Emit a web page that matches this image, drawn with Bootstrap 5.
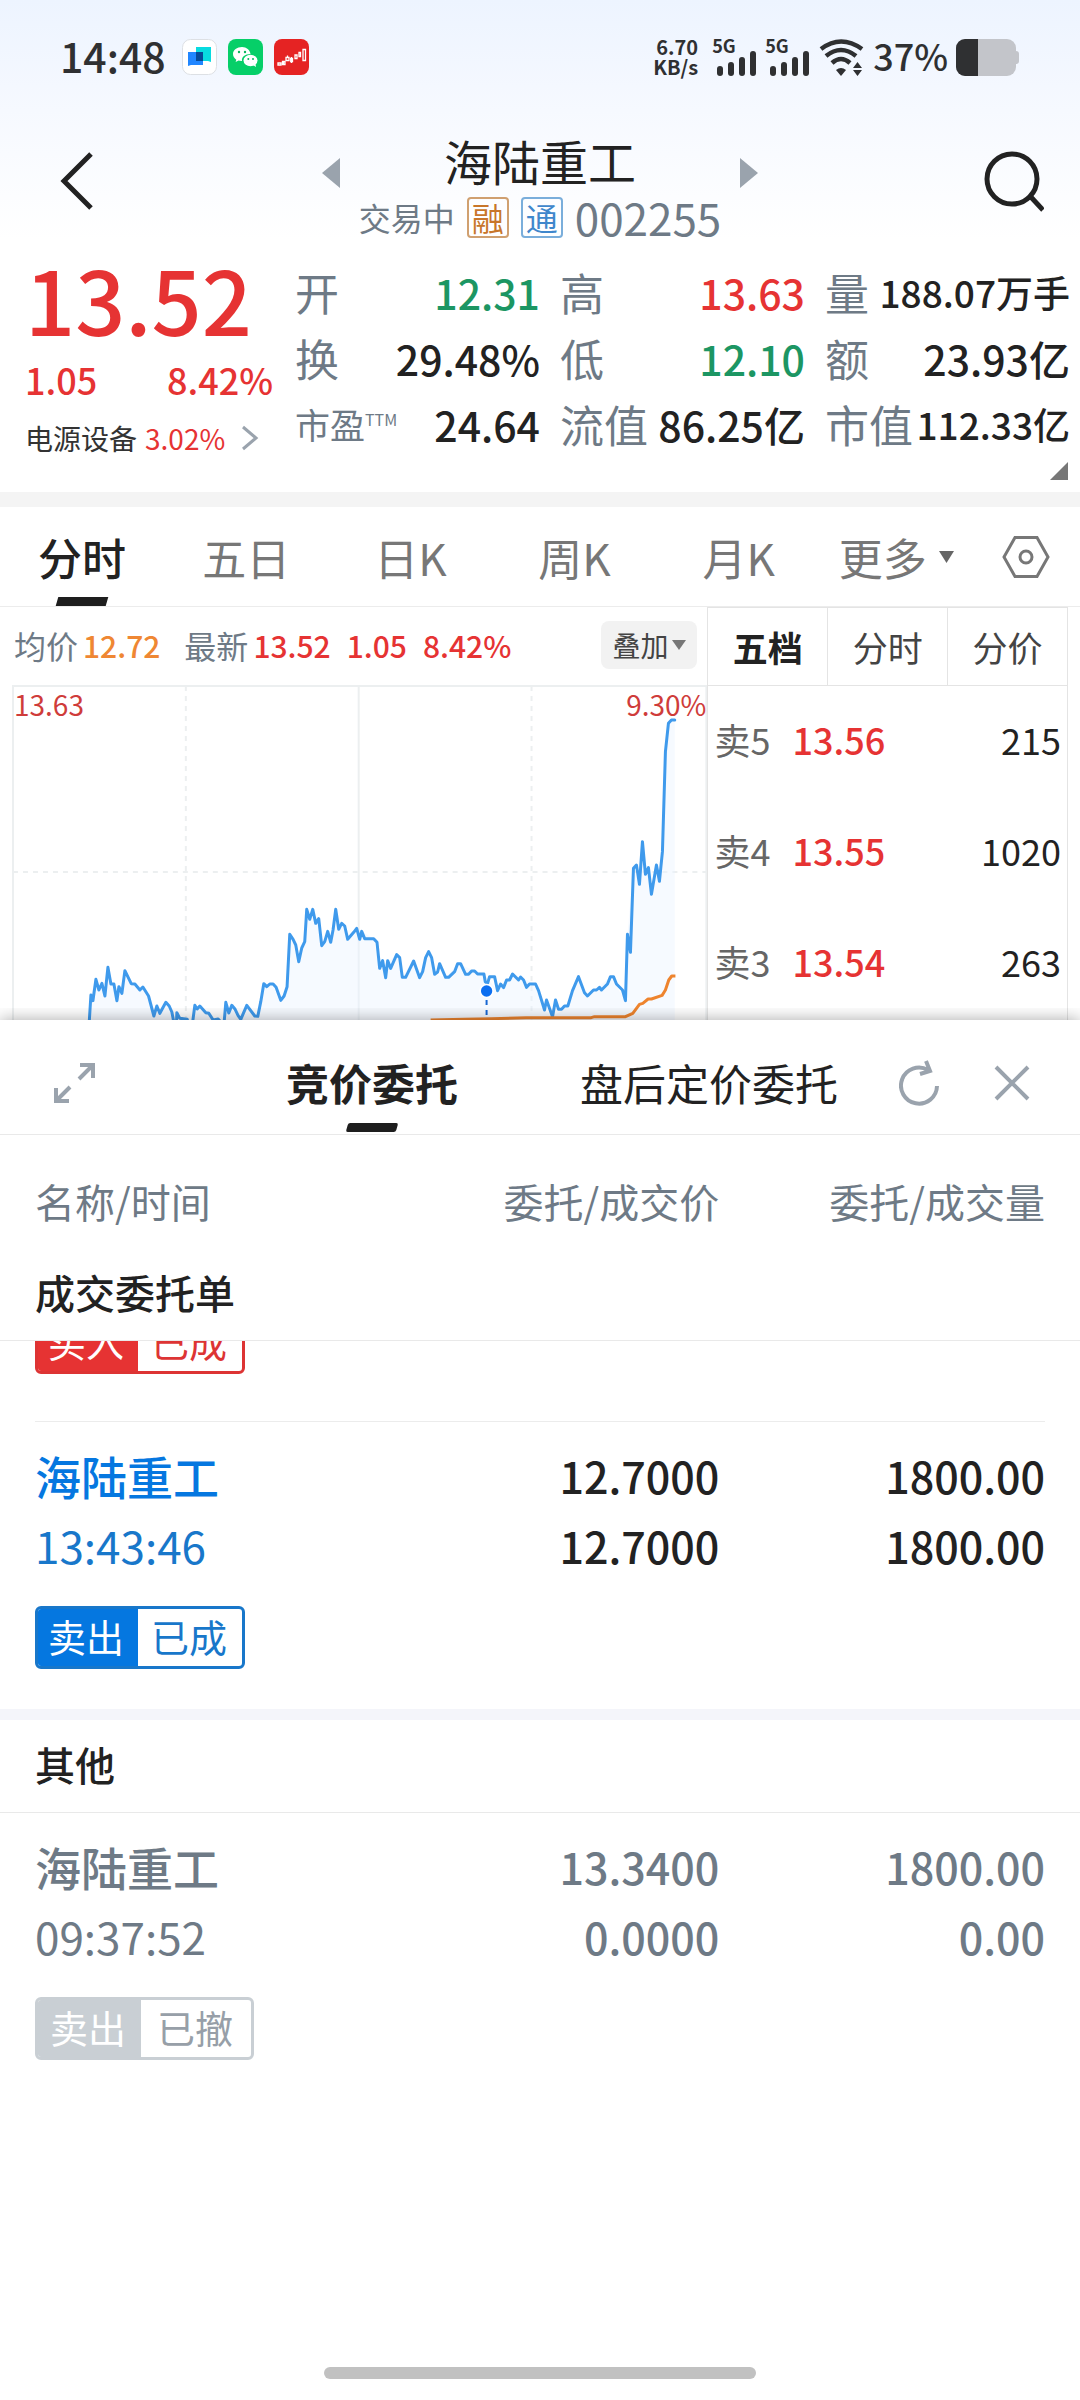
<!DOCTYPE html>
<html lang="zh-CN">
<head>
<meta charset="utf-8">
<meta name="viewport" content="width=device-width, initial-scale=1">
<title>海陆重工 002255</title>
<link href="https://cdn.jsdelivr.net/npm/bootstrap@5.3.0/dist/css/bootstrap.min.css" rel="stylesheet">
<style>
:root{--ink:#222;--slate:#6e7a86;--up:#e63333;--down:#1c9663;--sell:#0577e0;--rule:#ececec}
body{font-family:"Noto Sans CJK SC","Noto Sans",sans-serif;color:var(--ink);background:#fff;min-height:100vh;display:flex;flex-direction:column;overflow-x:hidden}
button.plain{background:none;border:0;padding:0;color:inherit;line-height:1;display:flex;align-items:center;justify-content:center}
svg{display:block;flex:none}
.fw-mid{font-weight:500}
.text-ink{color:var(--ink)}
.c-up{color:var(--up)}.c-down{color:var(--down)}.c-slate{color:var(--slate)}
.sky{background:linear-gradient(#edf4ff,#f6f9ff 110px,#fff 240px)}

.status{height:114px;padding:0 60px;color:#2f3032}
.status-time{font-size:41px;line-height:48px;font-weight:500;padding-bottom:4px}
.speed{font-size:20px;line-height:20px;font-weight:700;text-align:right}
.signal{position:relative;margin-left:16px}
.signal + .signal{margin-left:9px}
.signal span{position:absolute;left:-2px;top:-6px;font-size:18px;line-height:24px;font-weight:700}
.status-pct{font-size:36px;line-height:40px;font-weight:500;padding-bottom:4px}

.titlebar{height:137px;padding:18px 36px 0 46px}
.stock-name{font-size:48px;line-height:56px;font-weight:400;margin:0}
.stock-sub{font-size:32px;line-height:42px;gap:12px;margin-top:8px}
.stock-code{font-size:44px}
.flag{width:42px;height:41px;border:2px solid;border-radius:4px;font-size:32px;line-height:36px;text-align:center}
.flag-margin{color:#c8762a;border-color:#d0a070}
.flag-link{color:#3f87cc;border-color:#7aaedb}

.quote{height:241px;padding:8px 10px 0 25px}
.quote-left{width:270px;padding-right:22px}
.last-price{font-size:88px;line-height:94px;font-weight:500;margin-top:-8px}
.chg{font-size:36px;line-height:44px;font-weight:500;margin-top:12px}
.sector{font-size:28px;line-height:36px;margin-top:19px;color:#333}
.stats{display:grid;grid-template-columns:repeat(3,1fr);column-gap:20px;margin:0;height:198px}
.stat{height:66px;line-height:66px;white-space:nowrap}
.stat dt{font-weight:400;font-size:44px;color:var(--slate)}
.stat dt.tight{font-size:35px}
.stat sup{font-size:16px;top:-13px;line-height:1;vertical-align:baseline}
.stat dd{margin:0;font-size:41px;font-weight:500}
.stat dd.tight{font-size:37px}
.stat-corner{right:12px;bottom:12px}
.band{height:15px;background:#f4f4f4}

.ktabs{height:100px;border-bottom:1px solid var(--rule);color:#777;font-size:44px}
.ktabs .plain{height:99px}
.ktabs-main{width:76%}
.ktabs-more{width:24%;padding:0 30px 0 18px}
button.tab-on{position:relative;color:var(--ink);font-weight:500}
.tab-on::after{content:"";position:absolute;left:50%;bottom:0;width:50px;height:9px;margin-left:-25px;background:#1e1e1e;transform:skewX(-16deg)}

.market{height:413px;overflow:hidden}
.chart-col{width:65.5%}
.info{height:78px;padding:0 10px 2px 14px;font-size:30px;font-weight:500;color:var(--up)}
.info-label{font-size:32px;font-weight:400;color:var(--slate);margin-right:5px}
.overlay-btn.plain{height:48px;width:96px;background:#f2f2f2;border-radius:8px;font-size:28px;color:#444;font-weight:400;gap:4px}
.chart{height:335px}
.chart svg{width:100%;height:335px}
.axis-tag{font-size:28px;line-height:28px;top:5px;color:#cf3c3a}
.tag-price{left:14px}.tag-pct{right:1px}
.book{border:solid #e4e4e4;border-width:1px 1px 0 1px;margin-right:12px}
.book-tabs{height:78px;font-size:35px;color:#444}
.book-tabs .plain{border-bottom:1px solid #e4e4e4}
.book-tabs .plain + .plain{border-left:1px solid #e4e4e4}
.book-tabs .active{color:var(--ink);font-weight:700}
.book table{width:100%;font-size:36px}
.book td{height:111px;padding:0 6px 6px}
.book td:first-child{width:84px;color:#666}
.book td:nth-child(2){padding-left:0}

.sheet{position:relative;box-shadow:0 0 16px rgba(0,0,0,.35);background:#fff;clip-path:inset(-12px 0 0 0)}
.sheet-head{height:115px;border-bottom:1px solid #e9e9e9;padding:0 50px 0 52px;font-size:43px}
.sheet-head .plain{height:114px;padding-top:11px}
.sheet-head .tab-on{margin-left:190px}
.sheet-head .tab-on::after{bottom:2px;border-radius:2px}
.refresh{margin:0 53px 0 61px}
.orders{width:100%;table-layout:fixed;margin:0}
.orders th,.orders td{padding:0;font-weight:400}
.orders tr > :first-child{padding-left:35px}
.orders tr > :last-child{padding-right:35px}
.orders thead th{height:112px;padding-top:20px;font-size:40px;color:var(--slate)}
.orders .sect th{height:93px;padding-bottom:3px;font-size:40px;border-bottom:1px solid #e9e9e9;font-weight:500}
.line-a > *{height:88px;padding-top:18px!important;vertical-align:top;font-size:43px;line-height:70px;font-weight:500!important}
.line-a > :first-child{font-size:46px}
.line-b > *{height:72px;vertical-align:top;font-size:43px;line-height:70px;font-weight:500!important}
.line-b > :first-child{font-weight:400!important;font-size:44px}
.cut{height:33px}
.entry-rule{border-top:1px solid var(--rule);margin-top:47px}
.state{display:inline-flex;height:63px;border:3px solid;border-radius:6px;font-size:38px;line-height:54px;overflow:hidden;flex:none}
.state b{font-weight:400;color:#fff;padding:0 14px 0 10px}
.state i{font-style:normal;padding:0 15px 0 13px}
.st-buy{border-color:#dd3434;color:#dd3434}.st-buy b{background:var(--up)}
.st-sell{border-color:#1877ca;color:#1877ca}.st-sell b{background:var(--sell)}
.st-off{border-color:#c9cfd4;color:#979fa8}.st-off b{background:#c9cfd4;padding:0 15px 0 12px}
.st-off i{padding:0 18px 0 16px}
.state-cell{height:127px;padding-top:24px!important;vertical-align:top}
.band2{height:11px;background:#f4f5fa}
.home{width:432px;height:12px;border-radius:6px;background:#c1c1c1;margin:auto auto 21px}
</style>
</head>
<body>
<div class="sky">
  <div class="status d-flex align-items-center">
    <span class="status-time">14:48</span>
    <div class="d-flex ms-3" style="gap:11px">
      <svg width="35" height="36" viewBox="0 0 35 36"><rect x=".5" y=".5" width="34" height="35" rx="8" fill="#fff" stroke="#dde0e4"/><path d="M14 8h15v15l-3-1H14z" fill="#08dbe0"/><path d="M6 13h15v13H9l-3 1z" fill="#2186ff"/><path d="M14 13h7v9h-7z" fill="#064a98"/></svg>
      <svg width="35" height="36" viewBox="0 0 35 36"><rect width="35" height="36" rx="8" fill="#06cf68"/><path d="M14 8c-5 0-9 3-9 7 0 2.500 1.400 4.400 3.300 5.700L7.600 23l3-1.500c1 .3 2.300.5 3.400.4-.6-4 3-7 8.500-7C22 11 18.500 8 14 8z" fill="#fff"/><ellipse cx="22.500" cy="21.500" rx="7" ry="5.700" fill="#fff"/><path d="M25 26l3 2-.5-3z" fill="#fff"/><g fill="#06b85c"><circle cx="11" cy="13" r="1.200"/><circle cx="17" cy="13" r="1.200"/><circle cx="20.300" cy="20" r="1"/><circle cx="25" cy="20" r="1"/></g></svg>
      <svg width="35" height="36" viewBox="0 0 35 36"><rect width="35" height="36" rx="8" fill="#e52323"/><g stroke="#fff" stroke-width="1.300" fill="none"><path d="M4 24h3v2H4zM9.500 22v4M8.500 22.500h2.500v3H8.500zM12 18.500h3v3h-3zM13.500 16.500v2M17.500 18v6M16.700 19.500h1.800v3h-1.800zM21 16h2v3.500h-2zM25 13.500h1.500v4H25zM29 10.500h2.500v11H29z"/></g></svg>
    </div>
    <div class="d-flex align-items-center ms-auto">
      <div class="speed"><div>6.70</div><div>KB/s</div></div>
      <div class="signal"><span>5G</span><svg width="44" height="37" viewBox="0 0 44 37" fill="#2f3032"><rect x="3" y="27" width="6" height="10" rx="3"/><rect x="14" y="23" width="6" height="14" rx="3"/><rect x="25" y="18" width="6" height="19" rx="3"/><rect x="36" y="12" width="6" height="25" rx="3"/></svg></div>
      <div class="signal"><span>5G</span><svg width="44" height="37" viewBox="0 0 44 37" fill="#2f3032"><rect x="3" y="27" width="6" height="10" rx="3"/><rect x="14" y="23" width="6" height="14" rx="3"/><rect x="25" y="18" width="6" height="19" rx="3"/><rect x="36" y="12" width="6" height="25" rx="3"/></svg></div>
      <svg class="ms-2" width="46" height="37" viewBox="0 0 46 37" fill="none" stroke="#2f3032" stroke-width="4.500"><path d="M2 10Q22-5 43 10M7 17Q22 5 37 17M13 24Q22 16 31 24"/><path d="M17 31q5-4 10 0l-5 6z" fill="#2f3032" stroke="none"/><path d="M34 29h9l-4.500-6zM34 31h9l-4.500 6z" fill="#2f3032" stroke="none"/></svg>
      <span class="status-pct ms-2">37%</span>
      <svg class="ms-2" width="64" height="37" viewBox="0 0 64 37"><rect width="60" height="37" rx="9" fill="#c3c5ca"/><rect x="56" y="12" width="7" height="13" rx="3" fill="#c3c5ca"/><path d="M9 0h13v37H9a9 9 0 0 1-9-9V9a9 9 0 0 1 9-9z" fill="#2f3032"/></svg>
    </div>
  </div>
  <div class="titlebar d-flex justify-content-between">
    <button class="plain align-self-start pt-3" aria-label="返回"><svg width="52" height="64" viewBox="0 0 52 64" fill="none" stroke="#222" stroke-width="5"><path d="M45 6L18 33l27 27"/></svg></button>
    <div>
      <div class="d-flex justify-content-center align-items-end" style="gap:104px">
        <button class="plain" aria-label="上一只"><svg width="18" height="30" viewBox="0 0 18 30"><path d="M18 0v30L0 15z" fill="#9aa3ad"/></svg></button>
        <h1 class="stock-name">海陆重工</h1>
        <button class="plain" aria-label="下一只"><svg width="18" height="30" viewBox="0 0 18 30"><path d="M0 0v30l18-15z" fill="#9aa3ad"/></svg></button>
      </div>
      <div class="stock-sub d-flex justify-content-center align-items-center c-slate">
        <span>交易中</span><span class="flag flag-margin">融</span><span class="flag flag-link">通</span><span class="stock-code">002255</span>
      </div>
    </div>
    <button class="plain align-self-start pt-3" aria-label="搜索"><svg width="62" height="64" viewBox="0 0 62 64" fill="none" stroke="#222" stroke-width="5"><circle cx="30" cy="31" r="25"/><path d="M48 48l13 14"/></svg></button>
  </div>
</div>

<section class="quote d-flex position-relative">
  <div class="quote-left">
    <div class="last-price c-up">13.52</div>
    <div class="chg c-up d-flex justify-content-between"><span>1.05</span><span>8.42%</span></div>
    <a href="#" class="sector d-flex align-items-center text-decoration-none">电源设备<span class="c-up ms-2">3.02%</span><svg class="ms-3" width="18" height="26" viewBox="0 0 18 26" fill="none" stroke="#9aa3ad" stroke-width="3"><path d="M2 2l13 11L2 24"/></svg></a>
  </div>
  <dl class="stats flex-grow-1">
    <div class="stat d-flex justify-content-between"><dt>开</dt><dd class="c-down">12.31</dd></div>
    <div class="stat d-flex justify-content-between"><dt>高</dt><dd class="c-up">13.63</dd></div>
    <div class="stat d-flex justify-content-between"><dt>量</dt><dd class="tight">188.07万手</dd></div>
    <div class="stat d-flex justify-content-between"><dt>换</dt><dd>29.48%</dd></div>
    <div class="stat d-flex justify-content-between"><dt>低</dt><dd class="c-down">12.10</dd></div>
    <div class="stat d-flex justify-content-between"><dt>额</dt><dd>23.93亿</dd></div>
    <div class="stat d-flex justify-content-between"><dt class="tight">市盈<sup>TTM</sup></dt><dd>24.64</dd></div>
    <div class="stat d-flex justify-content-between"><dt>流值</dt><dd>86.25亿</dd></div>
    <div class="stat d-flex justify-content-between"><dt>市值</dt><dd class="tight">112.33亿</dd></div>
  </dl>
  <svg class="stat-corner position-absolute" width="18" height="18" viewBox="0 0 18 18"><path d="M18 0v18H0z" fill="#777"/></svg>
</section>
<div class="band"></div>

<nav class="ktabs d-flex">
  <div class="ktabs-main d-flex">
    <button class="plain col tab-on">分时</button>
    <button class="plain col">五日</button>
    <button class="plain col">日K</button>
    <button class="plain col">周K</button>
    <button class="plain col">月K</button>
  </div>
  <div class="ktabs-more d-flex justify-content-between">
    <button class="plain" style="gap:12px">更多<svg width="15" height="12" viewBox="0 0 15 12"><path d="M0 0h15L7.500 12z" fill="#666"/></svg></button>
    <button class="plain" aria-label="设置"><svg width="48" height="42" viewBox="0 0 48 42" fill="none" stroke="#777" stroke-width="3"><path d="M13 1.500h22L46 21 35 40.500H13L2 21z"/><circle cx="24" cy="21" r="6"/></svg></button>
  </div>
</nav>

<section class="market d-flex">
  <div class="chart-col">
    <div class="info d-flex align-items-center">
      <span class="info-label">均价</span><span style="color:#ef8733">12.72</span>
      <span class="info-label ms-4">最新</span><span>13.52</span><span class="ms-3">1.05</span><span class="ms-3">8.42%</span>
      <button class="plain overlay-btn ms-auto">叠加<svg width="14" height="10" viewBox="0 0 14 10"><path d="M0 0h14L7 10z" fill="#777"/></svg></button>
    </div>
    <div class="chart position-relative">
      <svg viewBox="0 15 2124 1005" preserveAspectRatio="none">
        <g fill="none" stroke="#eceff0" stroke-width="6"><path d="M39 1020V18H2121V1020M1077 18V1020"/><path d="M558 18V1020M1596 18V1020M39 576H2121" stroke-dasharray="15 15"/></g>
        <path fill="#eaf4fe" fill-opacity=".45" d="M268 1020L273 945 288 898 315 948 324 862 351 962 375 872 394 911 429 921 446 948 462 1008 498 967 522 1020 578 1020 585 976 640 1020 673 1020 678 967 723 1018 741 976 774 1009 792 911 829 922 843 961 862 920 870 763 897 845 915 785 921 688 957 716 966 797 1000 750 1008 688 1044 778 1071 745 1122 776 1140 865 1191 824 1208 892 1242 843 1260 893 1287 815 1305 883 1338 892 1374 851 1453 882 1494 932 1539 882 1608 912 1635 990 1659 1010 1705 978 1737 890 1764 948 1833 890 1878 962 1884 763 1902 565 1920 613 1929 485 1956 643 1989 515 1998 215 2007 130 2026 120V1020z"/>
        <path fill="none" stroke="#3f9aec" stroke-width="9" stroke-linejoin="round" stroke-linecap="round" d="M268 1025L273 945 279 962 288 898 297 930 306 910 315 948 324 862 333 912 342 912 351 962 357 920 366 940 375 872 394 911 405 912 420 930 429 921 446 948 462 1008 471 978 480 1000 498 967 508 978 516 996 522 1027 530 1027 531 998 540 1015 562 1018 566 1030 578 1030 585 976 592 987 600 978 618 998 627 1000 640 1020 655 1017 664 1027 673 1027 678 967 687 999 696 976 706 988 715 1007 723 1018 741 976 765 1008 774 1009 783 965 792 911 801 920 810 912 820 912 829 922 843 961 853 948 862 920 870 763 880 778 888 795 897 845 906 804 915 785 921 688 930 718 939 688 948 730 957 716 966 797 975 785 984 754 993 787 1000 750 1008 688 1017 748 1026 730 1035 738 1044 778 1062 757 1071 745 1080 778 1086 754 1095 776 1122 776 1132 787 1140 865 1149 842 1158 893 1164 842 1173 865 1191 824 1200 833 1208 892 1218 892 1242 843 1260 893 1269 875 1278 833 1287 815 1296 833 1305 883 1314 876 1320 851 1338 892 1347 892 1365 875 1374 851 1383 851 1398 883 1407 883 1416 873 1425 873 1434 882 1453 882 1457 905 1464 910 1470 890 1485 890 1494 932 1503 912 1512 923 1521 900 1530 900 1539 882 1557 900 1563 891 1572 900 1581 922 1590 912 1608 912 1617 932 1635 990 1641 960 1659 1010 1668 960 1677 988 1686 988 1695 978 1705 978 1719 932 1737 890 1755 938 1764 948 1782 930 1791 930 1800 922 1806 930 1824 912 1833 890 1842 890 1851 912 1869 930 1878 962 1884 763 1893 817 1902 565 1911 555 1920 613 1929 485 1938 583 1947 563 1956 643 1971 555 1980 604 1989 515 1998 215 2007 130 2016 120 2026 120"/>
        <path fill="none" stroke="#ee842e" stroke-width="9" stroke-linejoin="round" d="M1293 1020L1395 1018 1475 1016 1580 1013 1775 1013 1785 1010 1878 1010 1900 1000 1920 973 1930 970 1946 957 1956 957 1988 946 1998 930 2008 900 2017 888 2028 888"/>
        <path d="M1461 960V1020" stroke="#1767d2" stroke-width="6" stroke-dasharray="15 15"/><circle cx="1461" cy="933" r="22" fill="#fff"/><circle cx="1461" cy="933" r="17" fill="#0d6ff0"/>
      </svg>
      <span class="axis-tag tag-price position-absolute">13.63</span>
      <span class="axis-tag tag-pct position-absolute">9.30%</span>
    </div>
  </div>
  <div class="book flex-grow-1">
    <div class="book-tabs d-flex">
      <button class="plain col active">五档</button>
      <button class="plain col">分时</button>
      <button class="plain col">分价</button>
    </div>
    <table>
      <tr><td>卖5</td><td class="c-up fw-mid">13.56</td><td class="text-end">215</td></tr>
      <tr><td>卖4</td><td class="c-up fw-mid">13.55</td><td class="text-end">1020</td></tr>
      <tr><td>卖3</td><td class="c-up fw-mid">13.54</td><td class="text-end">263</td></tr>
    </table>
  </div>
</section>

<section class="sheet">
  <div class="sheet-head d-flex align-items-center">
    <button class="plain" aria-label="展开"><svg width="44" height="44" viewBox="0 0 44 44" fill="none" stroke="#9aa3ad" stroke-width="4"><path d="M28 4h13v13M41 4L27 18M17 40H4V27M4 40l14-14"/></svg></button>
    <button class="plain tab-on fw-bold">竞价委托</button>
    <button class="plain ms-auto">盘后定价委托</button>
    <button class="plain refresh" aria-label="刷新"><svg width="42" height="46" viewBox="0 0 42 46" fill="none" stroke="#9aa3ad" stroke-width="4"><path d="M38 26A18 18 0 1 1 29 10M27 1l4 10-10 3"/></svg></button>
    <button class="plain" aria-label="关闭"><svg width="36" height="36" viewBox="0 0 36 36" fill="none" stroke="#9aa3ad" stroke-width="4"><path d="M2 2l32 32M34 2L2 34"/></svg></button>
  </div>
  <table class="orders">
    <colgroup><col style="width:37%"><col style="width:29.6%"><col></colgroup>
    <thead><tr><th>名称/时间</th><th class="text-end">委托/成交价</th><th class="text-end">委托/成交量</th></tr></thead>
    <tbody>
      <tr class="sect"><th colspan="3">成交委托单</th></tr>
      <tr><td colspan="3"><div class="cut d-flex align-items-end overflow-hidden"><span class="state st-buy"><b>买入</b><i>已成</i></span></div><div class="entry-rule"></div></td></tr>
      <tr class="line-a" style="color:var(--sell)"><td>海陆重工</td><td class="text-end text-ink">12.7000</td><td class="text-end text-ink">1800.00</td></tr>
      <tr class="line-b" style="color:#1877ca"><td>13:43:46</td><td class="text-end text-ink">12.7000</td><td class="text-end text-ink">1800.00</td></tr>
      <tr><td colspan="3" class="state-cell"><span class="state st-sell"><b>卖出</b><i>已成</i></span></td></tr>
    </tbody>
    <tbody>
      <tr><td colspan="3" class="band2 p-0"></td></tr>
      <tr class="sect"><th colspan="3">其他</th></tr>
      <tr class="line-a c-slate"><td>海陆重工</td><td class="text-end">13.3400</td><td class="text-end">1800.00</td></tr>
      <tr class="line-b c-slate"><td>09:37:52</td><td class="text-end">0.0000</td><td class="text-end">0.00</td></tr>
      <tr><td colspan="3" class="state-cell"><span class="state st-off"><b>卖出</b><i>已撤</i></span></td></tr>
    </tbody>
  </table>
</section>
<div class="home"></div>
<script src="https://cdn.jsdelivr.net/npm/bootstrap@5.3.0/dist/js/bootstrap.bundle.min.js"></script>
</body>
</html>
